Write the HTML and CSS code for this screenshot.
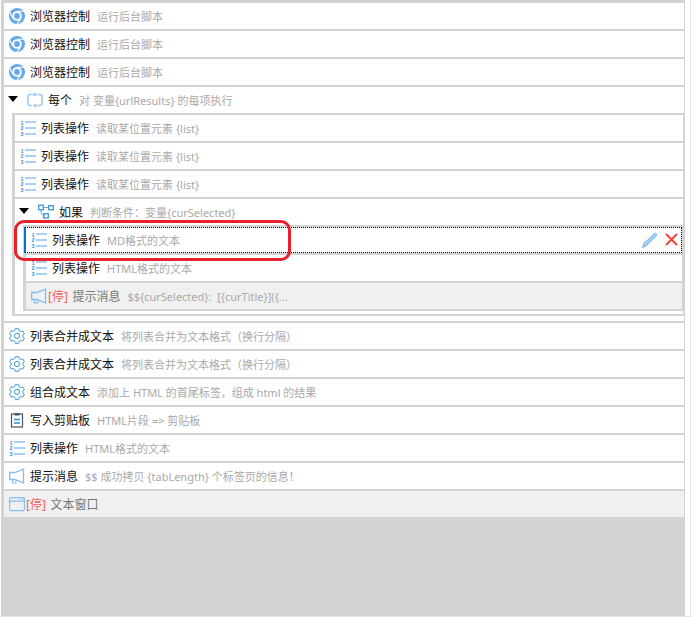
FILE: index.html
```html
<!DOCTYPE html>
<html lang="zh">
<head>
<meta charset="utf-8">
<title>流程</title>
<link rel="stylesheet" href="styles.css">
</head>
<body>
<svg class="defs" width="0" height="0" aria-hidden="true">
  <defs>
    <symbol id="chrome" viewBox="0 0 16 16">
      <circle cx="8" cy="8" r="8" fill="#63a9ec"/>
      <circle cx="8" cy="8" r="4.800" fill="#fff"/>
      <circle cx="8" cy="8" r="2.900" fill="#63a9ec"/>
      <path d="M8 3.200H15.300M3.900 10.400.9 4.600M11.900 10.400 8 16" stroke="#fff" stroke-width="1.100" fill="none"/>
    </symbol>
    <symbol id="listop" viewBox="0 0 16 16">
      <path d="M5 2h11M5 8h11M5 14h11" stroke="#a9d0f3" stroke-width="1.800" fill="none"/>
      <text class="num" x="0.500" y="4.500">1</text>
      <text class="num" x="0.500" y="10">2</text>
      <text class="num" x="0.500" y="15.500">3</text>
    </symbol>
    <symbol id="gear" viewBox="0 0 16 16">
      <path d="M6.300.7h3.400l.5 2 1.500.8 2-.6 1.700 2.900-1.500 1.400v1.600l1.500 1.400-1.700 2.900-2-.6-1.500.8-.5 2H6.300l-.5-2-1.500-.8-2 .6L.6 10.100l1.500-1.400V7.100L.6 5.700l1.700-2.900 2 .6 1.500-.8z" fill="none" stroke="#3c98d8" stroke-width="1" stroke-linejoin="round"/>
      <circle cx="8" cy="7.900" r="2.600" fill="none" stroke="#3c98d8" stroke-width="1"/>
    </symbol>
    <symbol id="loop" viewBox="0 0 16 16">
      <path d="M6.500 2.500H3Q1 2.500 1 4.500v7Q1 13.500 3 13.500h2M9.500 13.500H13q2 0 2-2v-7q0-2-2-2h-2" fill="none" stroke="#9cc8f0" stroke-width="1.500"/>
      <path d="M10.500 2.500 7 .5v4zM5.500 13.500 9 11.500v4z" fill="#9cc8f0"/>
    </symbol>
    <symbol id="branch" viewBox="0 0 16 16">
      <path d="M5 3.500h6M3 6v3.500l4 2.500" fill="none" stroke="#6aaee6" stroke-width="1"/>
      <rect x=".7" y="1.200" width="4.600" height="4.600" fill="none" stroke="#3f96dc" stroke-width="1.300"/>
      <rect x="10.700" y="1.700" width="4.600" height="4" fill="none" stroke="#3f96dc" stroke-width="1.300"/>
      <rect x="5.700" y="9.700" width="4.600" height="4.300" fill="none" stroke="#3f96dc" stroke-width="1.300"/>
    </symbol>
    <symbol id="horn" viewBox="0 0 16 16">
      <path d="M.7 4.500H6L14.500 1.200V15L6 11.500H.7z" fill="none" stroke="#85bdf0" stroke-width="1.300"/>
      <path d="M3.500 11.500V15H7V11.800" fill="none" stroke="#85bdf0" stroke-width="1.100"/>
    </symbol>
    <symbol id="clip" viewBox="0 0 16 16">
      <rect x="2.500" y="2" width="11" height="13" fill="none" stroke="#44566c" stroke-width="1.200"/>
      <rect x="5.500" y="1" width="5" height="2.500" fill="#44566c"/>
      <path d="M5 7.500h6M5 11h6" stroke="#2f8fdc" stroke-width="1.300"/>
    </symbol>
    <symbol id="window" viewBox="0 0 16 16">
      <rect x=".6" y="1.600" width="14.800" height="13" rx="1.500" fill="none" stroke="#85bdf0" stroke-width="1.200"/>
      <path d="M1 5.200h14" stroke="#85bdf0" stroke-width="1.200"/>
      <path d="M9.500 3.500h1M11.500 3.500h1M13.500 3.500h1" stroke="#85bdf0" stroke-width="1"/>
    </symbol>
  </defs>
</svg>
<main class="flow">
  <div class="row"><svg class="icon"><use href="#chrome"/></svg><span class="name">浏览器控制</span><span class="desc">运行后台脚本</span></div>
  <div class="row"><svg class="icon"><use href="#chrome"/></svg><span class="name">浏览器控制</span><span class="desc">运行后台脚本</span></div>
  <div class="row"><svg class="icon"><use href="#chrome"/></svg><span class="name">浏览器控制</span><span class="desc">运行后台脚本</span></div>

  <section class="group">
    <div class="group-head">
      <span class="caret"></span><svg class="icon"><use href="#loop"/></svg><span class="name">每个</span><span class="desc">对 变量{urlResults} 的每项执行</span>
    </div>
    <div class="nest">
      <div class="row"><svg class="icon"><use href="#listop"/></svg><span class="name">列表操作</span><span class="desc">读取某位置元素 {list}</span></div>
      <div class="row"><svg class="icon"><use href="#listop"/></svg><span class="name">列表操作</span><span class="desc">读取某位置元素 {list}</span></div>
      <div class="row"><svg class="icon"><use href="#listop"/></svg><span class="name">列表操作</span><span class="desc">读取某位置元素 {list}</span></div>
      <section class="group inner">
        <div class="group-head">
          <span class="caret"></span><svg class="icon"><use href="#branch"/></svg><span class="name">如果</span><span class="desc">判断条件：变量{curSelected}</span>
        </div>
        <div class="nest">
          <div class="row selected"><svg class="icon"><use href="#listop"/></svg><span class="name">列表操作</span><span class="desc">MD格式的文本</span>
            <span class="actions">
              <svg class="act" viewBox="0 0 16 16"><path d="M.6 15.400 1.800 11.600 12.400 1.600Q13.400.800 14.300 1.700T14.300 3.800L4 14.200z" fill="#a9d0f5" stroke="#5fa2e0" stroke-width=".8"/></svg>
              <svg class="act" viewBox="0 0 16 16"><path d="M2 2 13 13M13 2 2 13" stroke="#f4433c" stroke-width="2"/></svg>
            </span>
          </div>
          <div class="row"><svg class="icon"><use href="#listop"/></svg><span class="name">列表操作</span><span class="desc">HTML格式的文本</span></div>
          <div class="row off"><svg class="icon"><use href="#horn"/></svg><span class="stop">[停]</span><span class="name">提示消息</span><span class="desc">$${curSelected}:&nbsp; [{curTitle}]({...</span></div>
        </div>
      </section>
    </div>
  </section>

  <div class="row"><svg class="icon"><use href="#gear"/></svg><span class="name">列表合并成文本</span><span class="desc">将列表合并为文本格式（换行分隔）</span></div>
  <div class="row"><svg class="icon"><use href="#gear"/></svg><span class="name">列表合并成文本</span><span class="desc">将列表合并为文本格式（换行分隔）</span></div>
  <div class="row"><svg class="icon"><use href="#gear"/></svg><span class="name">组合成文本</span><span class="desc">添加上 HTML 的首尾标签，组成 html 的结果</span></div>
  <div class="row"><svg class="icon"><use href="#clip"/></svg><span class="name">写入剪贴板</span><span class="desc">HTML片段 =&gt; 剪贴板</span></div>
  <div class="row"><svg class="icon"><use href="#listop"/></svg><span class="name">列表操作</span><span class="desc">HTML格式的文本</span></div>
  <div class="row"><svg class="icon"><use href="#horn"/></svg><span class="name">提示消息</span><span class="desc">$$ 成功拷贝 {tabLength} 个标签页的信息！</span></div>
  <div class="row off"><svg class="icon"><use href="#window"/></svg><span class="stop">[停]</span><span class="name">文本窗口</span></div>
</main>
<div class="highlight"></div>
</body>
</html>
```

FILE: styles.css
```css
* { box-sizing: border-box; }
html, body { margin: 0; height: 100%; }
body {
  background: #fff;
  border-right: 1px solid #e4e4e4;
  border-bottom: 1px solid #e4e4e4;
  font-family: "Noto Sans", "Noto Sans CJK SC", sans-serif;
  font-size: 12px;
  position: relative;
  overflow: hidden;
}
.defs { position: absolute; }
.flow {
  height: 616px;
  width: 684px;
  margin-left: 1px;
  padding: 3px 1px 0 3px;
  background: #d3d3d3;
  display: flex;
  flex-direction: column;
  gap: 2px;
}
.row {
  flex: none;
  height: 26px;
  background: #fff;
  display: flex;
  align-items: center;
  padding-left: 5px;
  white-space: nowrap;
}
.icon { width: 16px; height: 16px; flex: none; margin-right: 5px; }
.num { font-size: 5.500px; fill: #3f8fdc; font-family: "Liberation Sans", sans-serif; font-weight: 700; }
.name { color: #111; }
.desc { color: #a9a9a9; font-size: 11px; margin-left: 7px; }
.stop { color: #f0605a; margin-right: 4.500px; }
.off { background: #f0f0f0; }
.off .name { color: #777; }
.off .icon { margin-right: 1px; }
.group { background: #fff; flex: none; padding-bottom: 5px; }
.inner { padding-bottom: 3px; }
.group-head {
  height: 26px;
  display: flex;
  align-items: center;
  padding-left: 4px;
}
.caret {
  width: 0;
  height: 0;
  border-left: 5px solid transparent;
  border-right: 5px solid transparent;
  border-top: 6px solid #000;
  margin-right: 9px;
  margin-bottom: 3px;
}
.nest {
  margin-left: 8px;
  padding: 2px 1px 2px 3px;
  background: #d3d3d3;
  display: flex;
  flex-direction: column;
  gap: 2px;
}
.selected {
  margin-left: -2px;
  border: 1px dotted #000;
  border-left: 2px solid #0a6fd0;
  padding-left: 5px;
  padding-right: 1px;
}
.actions { margin-left: auto; display: flex; gap: 6px; }
.act { width: 16px; height: 16px; }
.highlight {
  position: absolute;
  left: 14px;
  top: 220px;
  width: 277px;
  height: 41px;
  border: 3px solid #e8202c;
  border-radius: 10px;
}
```
